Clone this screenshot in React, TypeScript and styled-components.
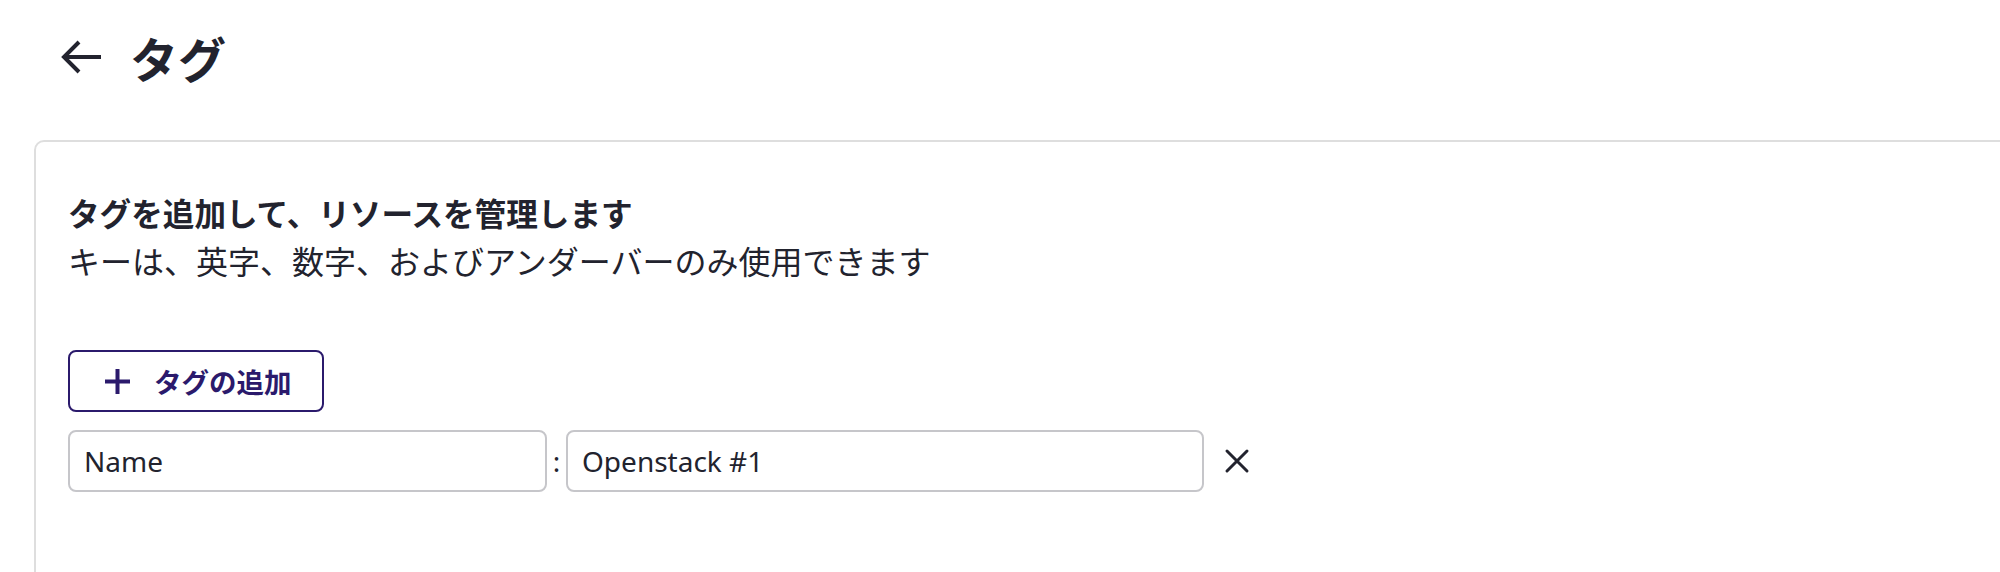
import { FC } from 'react';
import styled, { createGlobalStyle } from 'styled-components';

const GlobalStyle = createGlobalStyle`
  html, body {
    margin: 0;
    padding: 0;
    background: #ffffff;
    overflow: hidden;
  }
  body {
    font-family: "Noto Sans", "Noto Sans CJK JP", sans-serif;
    color: #22232e;
  }
`;

const Page = styled.div`
  width: 2000px;
  height: 572px;
  padding-left: 34px;
  box-sizing: border-box;
  overflow: hidden;
`;

const Header = styled.header`
  height: 114px;
  display: flex;
  align-items: center;
  gap: 28px;
  padding-left: 26px;
`;

const BackButton = styled.button`
  border: none;
  background: none;
  padding: 0;
  display: flex;
  align-items: center;
  cursor: pointer;
  color: #22232e;
`;

const Title = styled.h1`
  margin: 0;
  font-family: "Noto Sans CJK JP", sans-serif;
  font-size: 48px;
  font-weight: 700;
  line-height: 1;
  color: #22232e;
`;

const Card = styled.section`
  margin-top: 26px;
  width: calc(100% + 40px);
  min-height: 600px;
  box-sizing: border-box;
  border: 2px solid #dedede;
  border-radius: 10px 0 0 0;
  padding: 46px 32px;
`;

const Heading = styled.h2`
  margin: 0;
  font-family: "Noto Sans CJK JP", sans-serif;
  font-size: 31.6px;
  font-weight: 700;
  line-height: 48px;
`;

const Description = styled.p`
  margin: 0;
  font-family: "Noto Sans CJK JP", sans-serif;
  font-size: 32px;
  font-weight: 400;
  line-height: 48px;
`;

const AddButton = styled.button`
  margin-top: 66px;
  height: 62px;
  box-sizing: border-box;
  display: inline-flex;
  align-items: center;
  gap: 24px;
  padding: 0 30px 0 35px;
  border: 2px solid #2b1a6c;
  border-radius: 8px;
  background: #ffffff;
  color: #2b1a6c;
  font-family: "Noto Sans CJK JP", sans-serif;
  font-size: 27.5px;
  font-weight: 700;
  cursor: pointer;
`;

const TagRow = styled.div`
  margin-top: 18px;
  display: flex;
  align-items: center;
`;

const TagInput = styled.input<{ $width: number }>`
  width: ${(p) => p.$width}px;
  height: 62px;
  box-sizing: border-box;
  padding: 0 14px;
  border: 2px solid #c6c6ca;
  border-radius: 8px;
  font-family: "Noto Sans", "Noto Sans CJK JP", sans-serif;
  font-size: 28px;
  color: #22232e;
  background: #ffffff;
  outline: none;
`;

const Separator = styled.span`
  width: 19px;
  text-align: center;
  font-size: 28px;
  color: #22232e;
`;

const RemoveButton = styled.button`
  margin-left: 20px;
  border: none;
  background: none;
  padding: 0;
  display: flex;
  align-items: center;
  color: #22232e;
  cursor: pointer;
`;

type Tag = {
  key: string;
  value: string;
};

const tags: Tag[] = [{ key: 'Name', value: 'Openstack #1' }];

const ArrowLeft: FC = () => (
  <svg width="42" height="36" viewBox="0 0 42 36" fill="none">
    <path d="M41 18H4M19 3L4 18l15 15" stroke="currentColor" strokeWidth="4" />
  </svg>
);

const PlusIcon: FC = () => (
  <svg width="25" height="25" viewBox="0 0 25 25" fill="none">
    <path d="M12.5 0v25M0 12.5h25" stroke="currentColor" strokeWidth="4" />
  </svg>
);

const CloseIcon: FC = () => (
  <svg width="26" height="26" viewBox="0 0 26 26" fill="none">
    <path d="M3 3l20 20M23 3L3 23" stroke="currentColor" strokeWidth="3" strokeLinecap="round" />
  </svg>
);

export default function App() {
  return (
    <>
      <GlobalStyle />
      <Page>
        <Header>
          <BackButton aria-label="戻る">
            <ArrowLeft />
          </BackButton>
          <Title>タグ</Title>
        </Header>
        <Card>
          <Heading>タグを追加して、リソースを管理します</Heading>
          <Description>キーは、英字、数字、およびアンダーバーのみ使用できます</Description>
          <AddButton>
            <PlusIcon />
            タグの追加
          </AddButton>
          {tags.map((tag) => (
            <TagRow key={tag.key}>
              <TagInput $width={479} value={tag.key} readOnly />
              <Separator>:</Separator>
              <TagInput $width={638} value={tag.value} readOnly />
              <RemoveButton aria-label="削除">
                <CloseIcon />
              </RemoveButton>
            </TagRow>
          ))}
        </Card>
      </Page>
    </>
  );
}
